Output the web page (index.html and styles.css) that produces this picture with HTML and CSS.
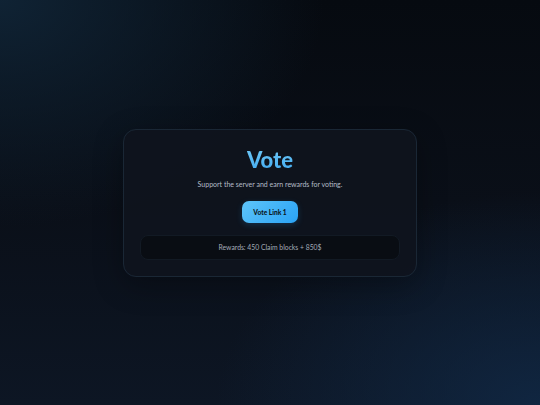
FILE: index.html
```html
<!DOCTYPE html>
<html>
<head>
<meta charset="utf-8">
<link rel="stylesheet" href="styles.css">
</head>
<body>
<main class="page">
  <section class="card">
    <h1 class="title">Vote</h1>
    <p class="subtitle">Support the server and earn rewards for voting.</p>
    <div class="links">
      <a class="vote-btn" href="#">Vote Link 1</a>
    </div>
    <div class="rewards">Rewards: 450 Claim blocks + 850$</div>
  </section>
</main>
</body>
</html>
```
FILE: styles.css
```css
html, body {
  margin: 0;
  padding: 0;
  height: 100%;
}
body {
  font-family: "Lato", "Noto Sans", sans-serif;
  background-color: #0a0f17;
  background-image:
    radial-gradient(ellipse 80% 70% at 100% 100%, rgba(17, 42, 72, 0.8), rgba(17, 42, 72, 0) 75%),
    radial-gradient(ellipse 75% 70% at 0% 0%, rgba(16, 36, 54, 0.95), rgba(16, 36, 54, 0) 80%),
    linear-gradient(180deg, #060a10 0%, #0a0f18 50%, #0d1624 100%);
  color: #c8d0da;
}
.page {
  height: 405px;
  display: flex;
  align-items: center;
  justify-content: center;
}
.card {
  width: 294px;
  box-sizing: border-box;
  padding: 18px 16px 16px;
  background: rgba(15, 20, 29, 0.92);
  border: 1px solid #1a2735;
  border-radius: 13px;
  display: flex;
  flex-direction: column;
  align-items: center;
  box-shadow: 0 8px 30px rgba(0, 0, 0, 0.3);
}
.title {
  margin: 0;
  font-size: 22px;
  line-height: 24px;
  font-weight: 900;
  color: #5bbdf3;
  background: linear-gradient(180deg, #6fc8f6, #41aaf0);
  -webkit-background-clip: text;
  background-clip: text;
  -webkit-text-fill-color: transparent;
}
.subtitle {
  margin: 7px 0 0;
  font-size: 7px;
  line-height: 10px;
  color: #b4bcc8;
}
.links {
  margin-top: 12px;
  display: flex;
  justify-content: center;
}
.vote-btn {
  display: flex;
  align-items: center;
  justify-content: center;
  width: 56px;
  height: 22px;
  border-radius: 7px;
  background: linear-gradient(135deg, #5ec4f8, #2aa3f6);
  color: #0a1622;
  font-size: 6.6px;
  font-weight: 900;
  text-decoration: none;
  box-shadow: 0 2px 6px rgba(44, 160, 240, 0.2);
}
.rewards {
  margin-top: 12px;
  align-self: stretch;
  height: 23px;
  display: flex;
  align-items: center;
  justify-content: center;
  background: #090d13;
  border: 1px solid #121a24;
  border-radius: 8px;
  font-size: 6.8px;
  color: #a4acb8;
}
```
